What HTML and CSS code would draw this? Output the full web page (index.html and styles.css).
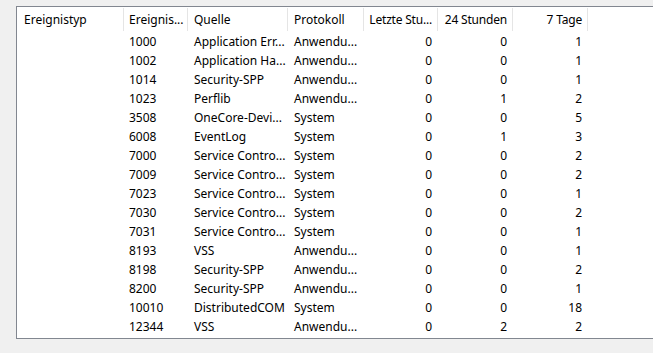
FILE: index.html
```html
<!DOCTYPE html>
<html lang="de">

<head>
    <meta charset="UTF-8">
    <title>Ereignisübersicht</title>
    <link rel="stylesheet" href="styles.css">
</head>

<body>
    <div class="panel">
        <!-- Column headers -->
        <div class="grid header">
            <div class="cell">Ereignistyp</div>
            <div class="cell">Ereignis...</div>
            <div class="cell">Quelle</div>
            <div class="cell">Protokoll</div>
            <div class="cell num">Letzte Stu...</div>
            <div class="cell num">24 Stunden</div>
            <div class="cell num">7 Tage</div>
        </div>

        <!-- Rows -->
        <div class="rows">
            <div class="grid row"><div class="cell"></div><div class="cell">1000</div><div class="cell">Application Err...</div><div class="cell">Anwendu...</div><div class="cell num">0</div><div class="cell num">0</div><div class="cell num">1</div></div>
            <div class="grid row"><div class="cell"></div><div class="cell">1002</div><div class="cell">Application Ha...</div><div class="cell">Anwendu...</div><div class="cell num">0</div><div class="cell num">0</div><div class="cell num">1</div></div>
            <div class="grid row"><div class="cell"></div><div class="cell">1014</div><div class="cell">Security-SPP</div><div class="cell">Anwendu...</div><div class="cell num">0</div><div class="cell num">0</div><div class="cell num">1</div></div>
            <div class="grid row"><div class="cell"></div><div class="cell">1023</div><div class="cell">Perflib</div><div class="cell">Anwendu...</div><div class="cell num">0</div><div class="cell num">1</div><div class="cell num">2</div></div>
            <div class="grid row"><div class="cell"></div><div class="cell">3508</div><div class="cell">OneCore-Devi...</div><div class="cell">System</div><div class="cell num">0</div><div class="cell num">0</div><div class="cell num">5</div></div>
            <div class="grid row"><div class="cell"></div><div class="cell">6008</div><div class="cell">EventLog</div><div class="cell">System</div><div class="cell num">0</div><div class="cell num">1</div><div class="cell num">3</div></div>
            <div class="grid row"><div class="cell"></div><div class="cell">7000</div><div class="cell">Service Contro...</div><div class="cell">System</div><div class="cell num">0</div><div class="cell num">0</div><div class="cell num">2</div></div>
            <div class="grid row"><div class="cell"></div><div class="cell">7009</div><div class="cell">Service Contro...</div><div class="cell">System</div><div class="cell num">0</div><div class="cell num">0</div><div class="cell num">2</div></div>
            <div class="grid row"><div class="cell"></div><div class="cell">7023</div><div class="cell">Service Contro...</div><div class="cell">System</div><div class="cell num">0</div><div class="cell num">0</div><div class="cell num">1</div></div>
            <div class="grid row"><div class="cell"></div><div class="cell">7030</div><div class="cell">Service Contro...</div><div class="cell">System</div><div class="cell num">0</div><div class="cell num">0</div><div class="cell num">2</div></div>
            <div class="grid row"><div class="cell"></div><div class="cell">7031</div><div class="cell">Service Contro...</div><div class="cell">System</div><div class="cell num">0</div><div class="cell num">0</div><div class="cell num">1</div></div>
            <div class="grid row"><div class="cell"></div><div class="cell">8193</div><div class="cell">VSS</div><div class="cell">Anwendu...</div><div class="cell num">0</div><div class="cell num">0</div><div class="cell num">1</div></div>
            <div class="grid row"><div class="cell"></div><div class="cell">8198</div><div class="cell">Security-SPP</div><div class="cell">Anwendu...</div><div class="cell num">0</div><div class="cell num">0</div><div class="cell num">2</div></div>
            <div class="grid row"><div class="cell"></div><div class="cell">8200</div><div class="cell">Security-SPP</div><div class="cell">Anwendu...</div><div class="cell num">0</div><div class="cell num">0</div><div class="cell num">1</div></div>
            <div class="grid row"><div class="cell"></div><div class="cell">10010</div><div class="cell">DistributedCOM</div><div class="cell">System</div><div class="cell num">0</div><div class="cell num">0</div><div class="cell num">18</div></div>
            <div class="grid row"><div class="cell"></div><div class="cell">12344</div><div class="cell">VSS</div><div class="cell">Anwendu...</div><div class="cell num">0</div><div class="cell num">2</div><div class="cell num">2</div></div>
        </div>
    </div>
</body>

</html>
```

FILE: styles.css
```css
/* Window background */
body {
    margin: 0;
    background-color: #f0f0f0;
    font-family: "Noto Sans", "Open Sans", sans-serif;
    font-size: 12px;
    color: #000;
}

/* List view box */
.panel {
    margin: 6px 0 0 16px;
    height: 331px;
    background-color: #fff;
    border: 1px solid #828790;
    border-right: none;
    overflow: hidden;
}

.grid {
    display: grid;
    grid-template-columns: 107px 64px 100px 76px 74px 75px 75px;
}

.cell {
    padding: 0 6px;
    white-space: nowrap;
    overflow: hidden;
}

.cell.num {
    text-align: right;
    padding-left: 0;
}

/* Header */
.header {
    padding-top: 1px;
}

.header .cell {
    height: 23px;
    line-height: 24px;
    border-right: 1px solid #e5e5e5;
}

.header .cell:first-child {
    padding-left: 7px;
}

.header .cell:nth-child(2) {
    padding-left: 5px;
}

.header .cell.num {
    padding-right: 5px;
    letter-spacing: -0.2px;
}

/* Rows */
.rows {
    padding-top: 1px;
}

.row .cell {
    height: 19px;
    line-height: 19px;
}

.row .cell.num {
    padding-right: 6px;
}

.row .cell:nth-child(2) {
    padding-left: 5px;
}
```
